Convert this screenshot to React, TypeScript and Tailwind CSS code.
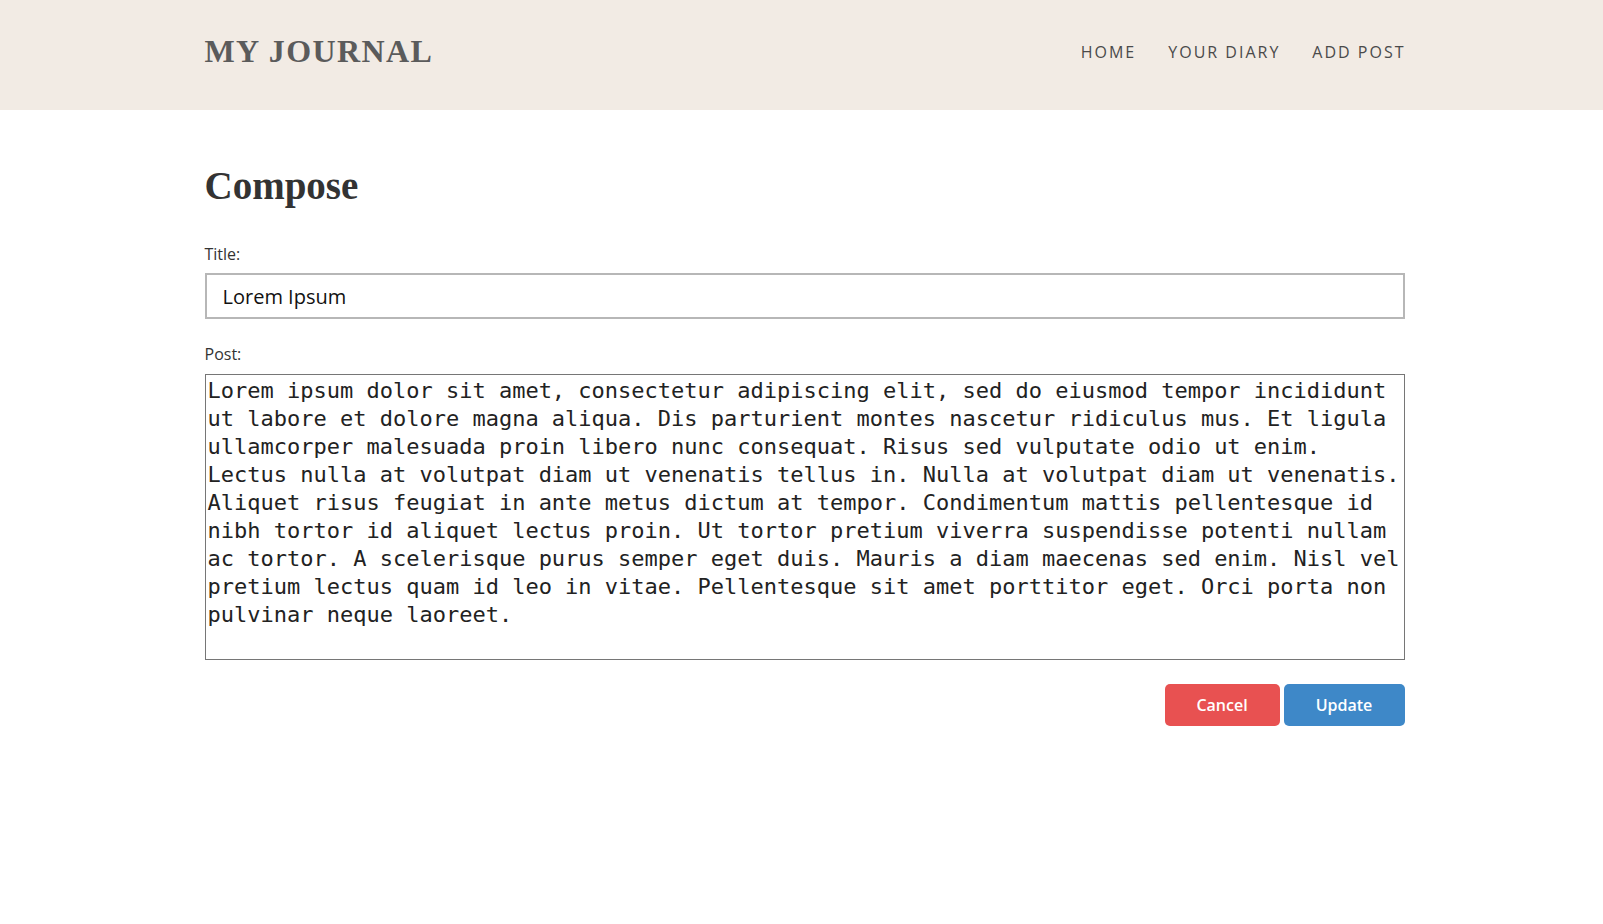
import React, { useState } from 'react';

const POST_TEXT =
  'Lorem ipsum dolor sit amet, consectetur adipiscing elit, sed do eiusmod tempor incididunt ut labore et dolore magna aliqua. Dis parturient montes nascetur ridiculus mus. Et ligula ullamcorper malesuada proin libero nunc consequat. Risus sed vulputate odio ut enim. Lectus nulla at volutpat diam ut venenatis tellus in. Nulla at volutpat diam ut venenatis. Aliquet risus feugiat in ante metus dictum at tempor. Condimentum mattis pellentesque id nibh tortor id aliquet lectus proin. Ut tortor pretium viverra suspendisse potenti nullam ac tortor. A scelerisque purus semper eget duis. Mauris a diam maecenas sed enim. Nisl vel pretium lectus quam id leo in vitae. Pellentesque sit amet porttitor eget. Orci porta non pulvinar neque laoreet.';

export default function App() {
  const [title, setTitle] = useState('Lorem Ipsum');
  const [post, setPost] = useState(POST_TEXT);

  return (
    <div className="min-h-screen bg-white font-['Open_Sans',sans-serif] text-[#333]">
      {/* Header */}
      <header className="h-[110px] bg-[#f2ebe4]">
        <div className="mx-auto w-[1206px] pl-[6px] h-full flex items-center justify-between">
          <a className="font-['Liberation_Serif',serif] font-bold text-[32px] tracking-[1.4px] text-[#5b5b5b] pb-[8px]">
            MY JOURNAL
          </a>
          <nav className="flex items-center gap-[32px] text-[16px] tracking-[2px] text-[#4a4a4a] pb-[6px] mr-[-1px]">
            <a>HOME</a>
            <a>YOUR DIARY</a>
            <a>ADD POST</a>
          </nav>
        </div>
      </header>

      {/* Compose form */}
      <main className="mx-auto w-[1206px] pl-[6px]">
        <h1 className="font-['Liberation_Serif',serif] font-bold text-[39px] leading-none text-[#333] pt-[56px] pb-[38px]">
          Compose
        </h1>
        <form onSubmit={(e) => e.preventDefault()}>
          <label className="block text-[16px] leading-[22px] text-[#333] mb-[8px]">Title:</label>
          <input
            type="text"
            value={title}
            onChange={(e) => setTitle(e.target.value)}
            className="block w-full h-[46px] border-2 border-[#b7b7b7] px-[16px] text-[20px] text-[#111] outline-none"
          />
          <label className="block text-[16px] leading-[22px] text-[#333] mt-[24px] mb-[9px]">Post:</label>
          <textarea
            rows={10}
            value={post}
            onChange={(e) => setPost(e.target.value)}
            className="block w-full h-[286px] border border-[#767676] px-[2px] pt-[2px] pb-[2px] font-['DejaVu_Sans_Mono',monospace] text-[22px] leading-[28px] text-[#222] resize-none outline-none"
          />
          <div className="flex justify-end gap-[4px] mt-[24px]">
            <button
              type="button"
              className="w-[115px] h-[42px] rounded-[5px] bg-[#e85151] text-white font-semibold text-[16px]"
            >
              Cancel
            </button>
            <button
              type="submit"
              className="w-[121px] h-[42px] rounded-[5px] bg-[#3e88c8] text-white font-semibold text-[16px]"
            >
              Update
            </button>
          </div>
        </form>
      </main>
    </div>
  );
}
